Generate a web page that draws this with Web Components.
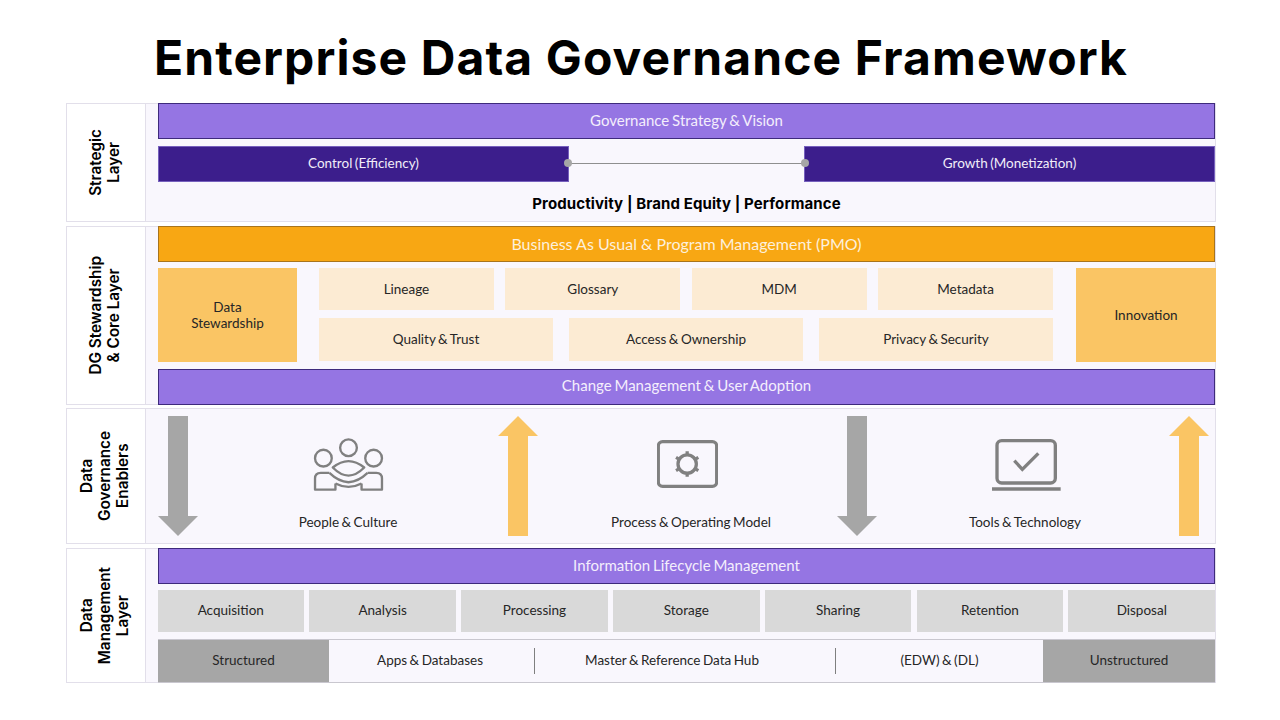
<!DOCTYPE html>
<html lang="en">
<head>
<meta charset="utf-8">
<title>Enterprise Data Governance Framework</title>
<style>
  html, body { margin: 0; padding: 0; background: #fff; }
  body { font-family: "Lato", "Liberation Sans", sans-serif; color: #262626; }
</style>
</head>
<body>
<gov-slide>
  <h-title slot="title">Enterprise Data Governance Framework</h-title>

  <gov-layer label="Strategic<br>Layer" h="119">
    <gov-bar>Governance Strategy &amp; Vision</gov-bar>
    <strategy-row></strategy-row>
  </gov-layer>

  <gov-layer label="DG Stewardship<br>&amp; Core Layer" h="178">
    <gov-bar kind="orange">Business As Usual &amp; Program Management (PMO)</gov-bar>
    <core-block></core-block>
    <gov-bar style="padding-bottom:4px">Change Management &amp; User Adoption</gov-bar>
  </gov-layer>

  <gov-layer label="Data<br>Governance<br>Enablers" h="136">
    <enablers-row></enablers-row>
  </gov-layer>

  <gov-layer label="Data<br>Management<br>Layer" h="135">
    <gov-bar>Information Lifecycle Management</gov-bar>
    <lifecycle-row></lifecycle-row>
    <source-row></source-row>
  </gov-layer>
</gov-slide>

<script>
class GovSlide extends HTMLElement {
  constructor() {
    super();
    this.attachShadow({ mode: "open" });
    this.shadowRoot.innerHTML = `
      <style>
        :host { display: block; width: 1280px; height: 720px; box-sizing: border-box; padding: 0 64px 0 66px; overflow: hidden; background: #fff; }
        .head { height: 103px; display: flex; justify-content: center; align-items: flex-start; }
        .stack { display: flex; flex-direction: column; gap: 4px; }
      </style>
      <div class="head"><slot name="title"></slot></div>
      <div class="stack"><slot></slot></div>
    `;
  }
}

class HTitle extends HTMLElement {
  constructor() {
    super();
    this.attachShadow({ mode: "open" });
    this.shadowRoot.innerHTML = `
      <style>
        :host { display: block; font: 700 48px/58px "Inter", "Liberation Sans", sans-serif; color: #000; margin-top: 29px; white-space: nowrap; letter-spacing: 1.1px; }
      </style>
      <slot></slot>
    `;
  }
}

class GovLayer extends HTMLElement {
  constructor() {
    super();
    this.attachShadow({ mode: "open" });
  }
  connectedCallback() {
    const label = this.getAttribute("label") || "";
    const h = this.getAttribute("h") || "120";
    this.shadowRoot.innerHTML = `
      <style>
        :host { display: grid; grid-template-columns: 79px 1fr; height: ${h}px; }
        .label { box-sizing: border-box; border: 1px solid #e2dfea; border-right: 0; background: #fff; display: flex; align-items: center; justify-content: center; }
        .label span { writing-mode: vertical-rl; transform: rotate(180deg); text-align: center; font: 600 15.3px/18px "Inter", "Liberation Sans", sans-serif; color: #000; white-space: nowrap; margin-right: 2px; }
        .body { box-sizing: border-box; border: 1px solid #e2dfea; background: #f9f7fd; padding-left: 12px; display: flex; flex-direction: column; height: 100%; }
        .inner { margin: -1px 0 -1px 0; display: flex; flex-direction: column; flex: 1; min-height: 0; }
      </style>
      <div class="label"><span>${label}</span></div>
      <div class="body"><div class="inner"><slot></slot></div></div>
    `;
  }
}

class GovBar extends HTMLElement {
  constructor() {
    super();
    this.attachShadow({ mode: "open" });
  }
  connectedCallback() {
    const orange = this.getAttribute("kind") === "orange";
    this.shadowRoot.innerHTML = `
      <style>
        :host { display: flex; align-items: center; justify-content: center; box-sizing: border-box; height: 36px; flex: none; color: ${orange ? "#fdf0dc" : "#f4eefc"};
          font: 400 ${orange ? "16" : "15"}px/1 "Lato", "Liberation Sans", sans-serif; word-spacing: ${orange ? "0" : "-1px"}; padding-bottom: ${orange ? "0" : "2px"};
          background: ${orange ? "#f8a713" : "#9575e3"}; border: 1px solid ${orange ? "#a8741c" : "#3e2a7c"}; }
      </style>
      <slot></slot>
    `;
  }
}

class StrategyRow extends HTMLElement {
  constructor() {
    super();
    this.attachShadow({ mode: "open" });
    this.shadowRoot.innerHTML = `
      <style>
        :host { display: block; padding-top: 7px; }
        .row { display: flex; height: 36px; }
        .pill { flex: none; width: 411px; box-sizing: border-box; padding-bottom: 1px; background: #3c1e8c; border: 1px solid #7660bd; color: #f1edf9; font: 400 13.5px/1 "Lato", "Liberation Sans", sans-serif; word-spacing: -1px; display: flex; align-items: center; justify-content: center; }
        .link { flex: 1; position: relative; display: flex; align-items: center; padding-bottom: 1px; }
        .link i { display: block; width: 100%; height: 1px; background: #8f8f8f; }
        .link::before, .link::after { content: ""; position: absolute; top: 13px; width: 8px; height: 8px; border-radius: 50%; background: #a6a6a6; }
        .link::before { left: -5px; }
        .link::after { right: -5px; }
        .kpi { text-align: center; font: 700 15px/18px "Inter", "Liberation Sans", sans-serif; letter-spacing: 0.1px; color: #000; padding-top: 13px; }
      </style>
      <div class="row">
        <div class="pill">Control (Efficiency)</div>
        <div class="link"><i></i></div>
        <div class="pill">Growth (Monetization)</div>
      </div>
      <div class="kpi">Productivity | Brand Equity | Performance</div>
    `;
  }
}

class CoreBlock extends HTMLElement {
  constructor() {
    super();
    this.attachShadow({ mode: "open" });
    this.shadowRoot.innerHTML = `
      <style>
        :host { display: grid; grid-template-columns: 139px 734px 1fr; column-gap: 22px; height: 94px; margin: 6px -1px 7px 0; font: 400 13.5px/16px "Lato", "Liberation Sans", sans-serif; word-spacing: -1px; color: #262626; }
        .side { background: #fac564; display: flex; align-items: center; justify-content: center; text-align: center; }
        .side.right { margin-left: 1px; }
        .mid { display: flex; flex-direction: column; gap: 8px; }
        .chips { display: flex; height: 43px; }
        .chips.four { gap: 11.5px; height: 42px; }
        .chips.three { gap: 16px; }
        .chips div { flex: 1; background: #fcebd3; display: flex; align-items: center; justify-content: center; }
        .chips.three div { padding-bottom: 1px; }
      </style>
      <div class="side">Data<br>Stewardship</div>
      <div class="mid">
        <div class="chips four"><div>Lineage</div><div>Glossary</div><div>MDM</div><div>Metadata</div></div>
        <div class="chips three"><div>Quality &amp; Trust</div><div>Access &amp; Ownership</div><div>Privacy &amp; Security</div></div>
      </div>
      <div class="side right">Innovation</div>
    `;
  }
}

class FlowArrow extends HTMLElement {
  constructor() {
    super();
    this.attachShadow({ mode: "open" });
  }
  connectedCallback() {
    const up = this.getAttribute("dir") === "up";
    this.shadowRoot.innerHTML = `
      <style>:host { display: block; width: 40px; height: 120px; } svg { display: block; }</style>
      <svg width="40" height="120" viewBox="0 0 40 120">
        <polygon fill="${up ? "#fac564" : "#a6a6a6"}" points="${up ? "20,0 40,20 30,20 30,120 10,120 10,20 0,20" : "10,0 30,0 30,100 40,100 20,120 0,100 10,100"}"/>
      </svg>
    `;
  }
}

class EnablerItem extends HTMLElement {
  constructor() {
    super();
    this.attachShadow({ mode: "open" });
  }
  connectedCallback() {
    const nudge = this.getAttribute("nudge") || "0";
    this.shadowRoot.innerHTML = `
      <style>
        :host { display: flex; flex-direction: column; align-items: center; height: 120px; }
        .icon { height: 90px; display: flex; justify-content: center; align-items: flex-start; }
        ::slotted(svg) { display: block; }
        .cap { font: 400 13.5px/18px "Lato", "Liberation Sans", sans-serif; word-spacing: -1px; color: #262626; margin-top: 7px; margin-left: ${nudge}px; white-space: nowrap; }
      </style>
      <div class="icon"><slot></slot></div>
      <div class="cap">${this.getAttribute("caption") || ""}</div>
    `;
  }
}

class EnablersRow extends HTMLElement {
  constructor() {
    super();
    this.attachShadow({ mode: "open" });
    this.shadowRoot.innerHTML = `
      <style>
        :host { display: grid; grid-template-columns: 40px 300px 40px 299px 40px 292px 40px; padding-top: 8px; }
      </style>
      <flow-arrow></flow-arrow>
      <enabler-item caption="People &amp; Culture">
        <svg width="77" height="57" viewBox="60 80 230 170" style="margin-top:20px" fill="none" stroke="#808080" stroke-width="7" stroke-linejoin="round">
          <circle cx="175" cy="115" r="25"/>
          <circle cx="100" cy="146" r="25"/>
          <circle cx="250" cy="146" r="25"/>
          <path d="M128 174 Q175 136 222 174 Q175 222 128 174 Z"/>
          <path d="M118 190 H92 Q75 190 75 207 V240 H136 V222"/>
          <path d="M232 190 H258 Q275 190 275 207 V240 H214 V222"/>
          <path d="M118 190 Q145 216 175 218 Q205 216 232 190"/>
          <path d="M136 222 Q155 232 175 232 Q195 232 214 222"/>
        </svg>
      </enabler-item>
      <flow-arrow dir="up"></flow-arrow>
      <enabler-item caption="Process &amp; Operating Model" nudge="7">
        <svg width="61" height="48" viewBox="80 46 186 144" style="margin-top:24px" fill="none" stroke="#808080" stroke-linecap="butt">
          <rect x="84" y="50" width="178" height="136" rx="13" stroke-width="10"/>
          <circle cx="172" cy="118" r="28" stroke-width="10"/>
          <path stroke-width="10" d="M172 90V79M172 146V157M148 104L138 98M196 132L206 138M148 132L138 138M196 104L206 98"/>
        </svg>
      </enabler-item>
      <flow-arrow></flow-arrow>
      <enabler-item caption="Tools &amp; Technology" nudge="4">
        <svg width="69" height="52" viewBox="37 40 207 156" style="margin-top:23px;margin-left:6px" fill="none" stroke="#808080">
          <rect x="52" y="45" width="175" height="127" rx="14" stroke-width="10"/>
          <path d="M104 105L128 131L176 83" stroke-width="10"/>
          <path d="M37 190H243" stroke-width="10"/>
        </svg>
      </enabler-item>
      <flow-arrow dir="up"></flow-arrow>
    `;
  }
}

class LifecycleRow extends HTMLElement {
  constructor() {
    super();
    this.attachShadow({ mode: "open" });
    const steps = ["Acquisition", "Analysis", "Processing", "Storage", "Sharing", "Retention", "Disposal"];
    this.shadowRoot.innerHTML = `
      <style>
        :host { display: flex; gap: 5.3px; height: 42px; margin: 6px 0 7px -0.5px; font: 400 13.5px/1 "Lato", "Liberation Sans", sans-serif; color: #262626; }
        div { flex: 1; background: #d9d9d9; display: flex; align-items: center; justify-content: center; }
        div:first-child { padding-bottom: 1px; }
      </style>
      ${steps.map((s) => `<div>${s}</div>`).join("")}
    `;
  }
}

class SourceRow extends HTMLElement {
  constructor() {
    super();
    this.attachShadow({ mode: "open" });
    this.shadowRoot.innerHTML = `
      <style>
        :host { display: grid; grid-template-columns: 171px 206px 301px 207px 172px; height: 44px; box-sizing: border-box; border-top: 1px solid #c9c7cf; border-bottom: 1px solid #c9c7cf; font: 400 13.5px/1 "Lato", "Liberation Sans", sans-serif; word-spacing: -1px; color: #262626; }
        div { display: flex; align-items: center; justify-content: center; position: relative; padding-bottom: 1px; box-sizing: border-box; }
        .dark { background: #a6a6a6; }
        .sep::after { content: ""; position: absolute; right: 0; top: 8px; bottom: 8px; width: 1px; background: #7f7f7f; }
        .apps { padding-right: 4px; }
        .hub { padding-right: 27px; }
      </style>
      <div class="dark">Structured</div>
      <div class="sep apps">Apps &amp; Databases</div>
      <div class="sep hub">Master &amp; Reference Data Hub</div>
      <div>(EDW) &amp; (DL)</div>
      <div class="dark">Unstructured</div>
    `;
  }
}

customElements.define("h-title", HTitle);
customElements.define("gov-bar", GovBar);
customElements.define("strategy-row", StrategyRow);
customElements.define("core-block", CoreBlock);
customElements.define("flow-arrow", FlowArrow);
customElements.define("enabler-item", EnablerItem);
customElements.define("enablers-row", EnablersRow);
customElements.define("lifecycle-row", LifecycleRow);
customElements.define("source-row", SourceRow);
customElements.define("gov-layer", GovLayer);
customElements.define("gov-slide", GovSlide);
</script>
</body>
</html>
